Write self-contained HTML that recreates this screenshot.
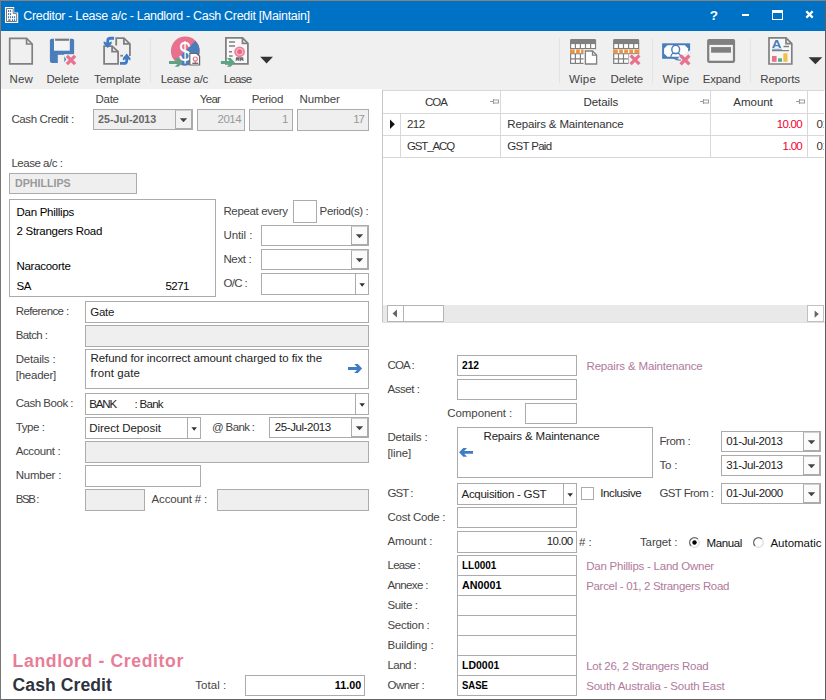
<!DOCTYPE html>
<html><head><meta charset="utf-8">
<style>
*{box-sizing:border-box;margin:0;padding:0}
html,body{width:826px;height:700px;overflow:hidden;background:#fff}
body{font-family:"Liberation Sans",sans-serif;font-size:12px;color:#333;position:relative}
#win{position:absolute;left:0;top:0;width:826px;height:700px;overflow:hidden;background:#fff}
#frame{position:absolute;left:0;top:0;width:826px;height:700px;border:1px solid #777;border-top-color:#8a8178;border-right-color:#5c5c5c;border-bottom-color:#666;pointer-events:none}
.abs,.l,.b,.t{position:absolute;white-space:nowrap}
#title{position:absolute;left:1px;top:1px;width:824px;height:30px;background:#0072c6}
#title .cap{position:absolute;left:22.300px;top:6px;color:#fff;font-size:12.500px;letter-spacing:-0.320px;line-height:18px}
#tb{position:absolute;left:1px;top:31px;width:824px;height:58px;background:#f0f0f0}
.tl{position:absolute;top:71px;font-size:11.5px;letter-spacing:-0.200px;line-height:16px;color:#444;transform:translateX(-50%);white-space:nowrap}
.l{font-size:11.5px;letter-spacing:-0.4px;line-height:16px;color:#444}
.b{border:1px solid #ababab;background:#fff;height:21px;font-size:11.5px;letter-spacing:-0.4px;line-height:19px;color:#222;padding:0 4px;overflow:hidden}
.g{background:#efefef}
.bold{font-weight:bold}
.r{text-align:right}
.p{color:#b07a9c}
.k{color:#111}
.dd{position:absolute;right:0;top:0;bottom:0;width:17px;border:1px solid #ababab;border-top-color:#cfcfcf;background:#fbfbfb}
.dd:after{content:"";position:absolute;left:3.800px;top:7.200px;width:7.400px;height:4px;background:#444;clip-path:polygon(0 0,100% 0,50% 100%)}
.dd2{position:absolute;right:0;top:0;bottom:0;width:13px;border-left:1px solid #ababab;background:#fff}
.dd2:after{content:"";position:absolute;left:3.400px;top:9.300px;width:5.600px;height:3.400px;background:#333;clip-path:polygon(0 0,100% 0,50% 100%)}
.rad{position:absolute;width:11px;height:11px;border-radius:50%;border:1px solid #8a8a8a;background:#fff;box-shadow:inset 1px 1px 1px #bbb}
.rad.on:after{content:"";position:absolute;left:2.500px;top:2.500px;width:4px;height:4px;border-radius:50%;background:#111}
</style></head><body>
<div id="win">
<div id="title"><div class="cap">Creditor - Lease a/c - Landlord - Cash Credit [Maintain]</div>
<svg class="abs" style="left:0;top:0" width="824" height="30" viewBox="1 1 824 30">
<path d="M6,8H13.200V13.600H17.200V22H6Z" fill="#fff" stroke="#fff" stroke-width="2" stroke-linejoin="miter"/>
<path d="M6.500,8.500H13.200V13.600H16.700V21.500H6.500Z" fill="#fff" stroke="#777" stroke-width="1"/>
<g fill="#3f78c0"><rect x="8" y="10" width="1.100" height="2"/><rect x="10" y="10" width="1.100" height="2"/><rect x="8" y="13.100" width="1.100" height="2"/><rect x="10" y="13.100" width="1.100" height="2"/><rect x="8" y="16.200" width="1.100" height="2"/><rect x="10" y="16.200" width="1.100" height="2"/><rect x="12" y="16.200" width="1.100" height="2"/><rect x="14" y="16.200" width="1.100" height="2"/><rect x="12" y="19.200" width="1.100" height="2"/><rect x="14" y="19.200" width="1.100" height="2"/></g>
<rect x="8.300" y="19.300" width="2.300" height="1.900" fill="#777"/>
<rect x="742" y="14" width="7" height="2" fill="#fff"/>
<rect x="772.500" y="11.500" width="10" height="8" fill="none" stroke="#fff" stroke-width="1"/><rect x="772" y="10" width="11" height="3" fill="#fff"/>
<path d="M806.300,11.200L812.700,17.600M812.700,11.200L806.300,17.600" stroke="#fff" stroke-width="2.200"/>
</svg>
<div class="abs bold" style="left:708.800px;top:6.500px;color:#fff;font-size:13.500px;line-height:16px">?</div>
</div>
<div id="tb"></div>

<svg class="abs" style="left:0;top:30px" width="826" height="60" viewBox="0 30 826 60">
<!-- separators -->
<g stroke="#e3e3e3" stroke-width="1"><path d="M150.5,38V83M559.5,38V83M652.5,38V83M750.5,38V83"/></g>
<!-- New -->
<g fill="none" stroke="#808080" stroke-width="1.7"><path d="M9.7,38.4H26.6L32.2,44V63.9H9.7Z"/><path d="M26.6,38.4V44H32.2"/></g>
<!-- Delete floppy -->
<path d="M51.700,38.800H72.300Q74.100,38.800 74.100,40.600V61.100Q74.100,62.900 72.300,62.900H51.700Q49.900,62.900 49.900,61.100V40.600Q49.900,38.800 51.700,38.800Z" fill="#4a7ebb"/>
<rect x="54" y="38.700" width="15.800" height="12" fill="#f4f4f4"/>
<rect x="55.100" y="38.800" width="13.900" height="2" fill="#7a7a7a"/>
<rect x="57.800" y="54.800" width="7" height="8.300" fill="#f0f0f0"/>
<rect x="64.100" y="54.200" width="11" height="9.500" fill="#f0f0f0"/>
<path d="M64.300,56.200L66.200,59.400L64.300,62.300Z" fill="#4a7ebb"/>
<g stroke="#e8728f" stroke-width="3.300" stroke-linecap="butt"><path d="M66.900,55.900L75.100,64.100M75.100,55.900L66.900,64.100"/></g>
<!-- Template -->
<g fill="none" stroke="#808080" stroke-width="1.800"><path d="M116.200,45.500V38.100H123.900L129.900,43.900V55.900"/><path d="M123.900,38.100V43.800H129.900"/><path d="M120.300,55.700H123"/>
<path d="M104.100,46.200H112.100L118.100,51.600V63.900H104.100Z"/><path d="M112.100,46.200V51.600H118.100"/></g>
<path d="M114,38.250H110.500Q107.700,38.250 107.700,41V44" fill="none" stroke="#3f7cc4" stroke-width="2.800"/><path d="M103.700,41.200L107.700,43.300L111.600,41.200V43.800L107.700,48.100L103.700,43.800Z" fill="#3f7cc4"/><rect x="102" y="45.200" width="10" height="1.900" fill="#f0f0f0" opacity="0"/>
<path d="M120,63.450H124Q126.700,63.450 126.700,60.700V58" fill="none" stroke="#3f7cc4" stroke-width="2.800"/><path d="M122.900,60.500L126.700,58.400L130.400,60.500V57.900L126.700,53.600L122.900,57.900Z" fill="#3f7cc4"/>
<!-- Lease a/c -->
<circle cx="185.3" cy="51" r="14.4" fill="#e8718d"/>
<path d="M181.5,54.700L195.400,40.800A14.4,14.4 0 0 1 181.500,64.900Z" fill="#4a7ebb"/>
<text transform="translate(185,61.300) scale(0.72,1)" font-family="Liberation Sans,sans-serif" font-size="28.500" fill="#fff" text-anchor="middle">$</text>
<path d="M189.800,53.500H196.800L199.600,56.300V65H189.800Z" fill="#fff" stroke="#666" stroke-width="1.200"/>
<circle cx="195.300" cy="59" r="2" fill="none" stroke="#e8718d" stroke-width="1.200"/><path d="M195.300,61V63.500" stroke="#e8718d" stroke-width="1.200"/><path d="M192.300,63.300H198.300" stroke="#666" stroke-width="1.300"/>
<path d="M169,61H177.500L174.800,58H178.500L182.700,62.400L178.500,66.700H174.800L177.500,64H169Z" fill="#5ba585"/>
<!-- Lease -->
<g fill="#f8f8f8" stroke="#808080" stroke-width="1.800"><path d="M225.900,37.900H242.600L247.900,43.300V63.900H225.900Z"/><path d="M242.500,37.900V43.400H247.900" fill="none"/></g>
<g stroke="#808080" stroke-width="1.500"><path d="M229,41.900H235M229,46.100H235M229,51.800H232M229,55.900H232.700"/></g>
<path d="M236,57.300L235.600,61.200L237.700,60L239.200,61.400L239.600,57.300ZM243.200,57.300L243.600,61.200L241.500,60L240,61.400L239.600,57.300Z" fill="#6e6e6e"/>
<circle cx="239.600" cy="51.800" r="5.400" fill="#ee8199"/><circle cx="239.600" cy="51.800" r="3.300" fill="none" stroke="#f9c9d3" stroke-width="0.900"/><circle cx="239.600" cy="51.800" r="2" fill="#e9647f"/>
<path d="M220.900,61H229.600L226.900,58H230.600L234.900,62.400L230.600,66.700H226.900L229.600,64H220.900Z" fill="#5ba585"/>
<path d="M260.200,56.800H273L266.600,63.600Z" fill="#333"/>
<!-- Wipe table -->
<g><path d="M570,44V40.400Q570,39 571.400,39H594.700Q596.100,39 596.100,40.400V44Z" fill="#808080"/>
<rect x="570.600" y="43.500" width="24.900" height="19.900" fill="#fff" stroke="#808080" stroke-width="1.200"/>
<path d="M575.400,44V63.500M580.400,44V63.500M585.500,44V63.500M590.600,44V63.500M570,48.700H596M570,53.700H596M570,58.800H596" fill="none" stroke="#808080" stroke-width="1.200"/>
<rect x="570" y="49.300" width="26.100" height="3.900" fill="#fff"/>
<g fill="#f0923a"><rect x="570" y="49.400" width="4.700" height="3.700"/><rect x="576.100" y="49.400" width="3.700" height="3.700"/><rect x="581.100" y="49.400" width="3.700" height="3.700"/><rect x="586.200" y="49.400" width="3.700" height="3.700"/><rect x="591.300" y="49.400" width="4.800" height="3.700"/></g></g>
<rect x="583.500" y="49.400" width="15" height="16" fill="#f0f0f0"/>
<g fill="#fff" stroke="#808080" stroke-width="1.300"><path d="M585.400,51H592.500L596.600,55.100V64H585.400Z"/><path d="M592.500,51V55.100H596.600" fill="none"/></g>
<!-- Delete table -->
<g transform="translate(43.100,0)"><path d="M570,44V40.400Q570,39 571.400,39H594.700Q596.100,39 596.100,40.400V44Z" fill="#808080"/>
<rect x="570.600" y="43.500" width="24.900" height="19.900" fill="#fff" stroke="#808080" stroke-width="1.200"/>
<path d="M575.400,44V63.500M580.400,44V63.500M585.500,44V63.500M590.600,44V63.500M570,48.700H596M570,53.700H596M570,58.800H596" fill="none" stroke="#808080" stroke-width="1.200"/>
<rect x="570" y="49.300" width="26.100" height="3.900" fill="#fff"/>
<g fill="#f0923a"><rect x="570" y="49.400" width="4.700" height="3.700"/><rect x="576.100" y="49.400" width="3.700" height="3.700"/><rect x="581.100" y="49.400" width="3.700" height="3.700"/><rect x="586.200" y="49.400" width="3.700" height="3.700"/><rect x="591.300" y="49.400" width="4.800" height="3.700"/></g></g>
<rect x="628.500" y="54.300" width="12" height="11" fill="#f0f0f0"/>
<g stroke="#e8718d" stroke-width="3.200"><path d="M630.600,55.400L639.400,64.200M639.400,55.400L630.600,64.200"/></g>
<!-- Wipe money -->
<rect x="662.100" y="43.300" width="28" height="15.500" fill="#4a7ebb"/>
<path d="M667.300,45.300H684.900L688.100,48.500V53.600L684.900,56.800H667.300L664.100,53.600V48.500Z" fill="#fff"/>
<ellipse cx="675.700" cy="49.600" rx="3.900" ry="4.300" fill="#fff" stroke="#4a7ebb" stroke-width="1.400"/>
<path d="M670.800,56.800Q671.300,52.600 675.700,53.300Q680.100,52.600 680.600,56.800" fill="none" stroke="#4a7ebb" stroke-width="1.300"/>
<path d="M690.500,50L678.500,57.500L677,66H691Z" fill="#f0f0f0"/>
<path d="M673,57.800Q677,60.500 681,60.200" fill="none" stroke="#4a7ebb" stroke-width="1.200"/>
<g stroke="#e8718d" stroke-width="3.200"><path d="M680.600,55.500L689.400,64.300M689.400,55.500L680.600,64.300"/></g>
<!-- Expand -->
<rect x="707.100" y="38.900" width="28" height="24" rx="1.800" fill="#808080"/>
<rect x="709.300" y="44.900" width="23.600" height="15.800" fill="#f3f3f3"/>
<rect x="711.100" y="47.100" width="19.900" height="5.600" fill="#808080"/>
<!-- Reports -->
<g fill="#f7f7f7" stroke="#808080" stroke-width="1.700"><path d="M769,37.800H786L791.800,43.600V64H769Z"/><path d="M786,37.800V43.600H791.800" fill="none"/></g>
<text transform="translate(771.800,48.200) scale(1.28,1)" font-family="Liberation Sans,sans-serif" font-size="10.500" font-weight="bold" fill="#4a7ebb">A</text>
<path d="M772,50.700H789M783.500,46.500H789" stroke="#808080" stroke-width="1.300"/><path d="M772,49.300H782" stroke="#4a7ebb" stroke-width="0.800"/>
<rect x="772" y="56" width="4.600" height="5.800" fill="#e8718d"/><rect x="778" y="58.300" width="4" height="3.500" fill="#5fa886"/><rect x="783.300" y="53.300" width="4.200" height="8.500" fill="#efc04e"/>
<path d="M808.500,57.300H822.300L815.400,64.300Z" fill="#333"/>
</svg>


<div class="l " style="left:9.5px;top:71px;letter-spacing:0.131px;">New</div>
<div class="l " style="left:46.4px;top:71px;letter-spacing:-0.107px;">Delete</div>
<div class="l " style="left:93.9px;top:71px;letter-spacing:0.017px;">Template</div>
<div class="l " style="left:160.7px;top:71px;letter-spacing:-0.274px;">Lease a/c</div>
<div class="l " style="left:223.7px;top:71px;letter-spacing:-0.707px;">Lease</div>
<div class="l " style="left:569px;top:71px;letter-spacing:0.225px;">Wipe</div>
<div class="l " style="left:610.6px;top:71px;letter-spacing:-0.124px;">Delete</div>
<div class="l " style="left:662.4px;top:71px;letter-spacing:0.225px;">Wipe</div>
<div class="l " style="left:702.7px;top:71px;letter-spacing:-0.217px;">Expand</div>
<div class="l " style="left:760.3px;top:71px;letter-spacing:-0.095px;">Reports</div>
<div class="l " style="left:95.6px;top:91px;letter-spacing:-0.323px;">Date</div>
<div class="l " style="left:199.8px;top:91px;letter-spacing:-0.709px;">Year</div>
<div class="l " style="left:251.7px;top:91px;letter-spacing:-0.324px;">Period</div>
<div class="l " style="left:299.5px;top:91px;letter-spacing:-0.117px;">Number</div>
<div class="l " style="left:11.4px;top:111px;letter-spacing:-0.362px;">Cash Credit :</div>
<div class="b g bold" style="left:93px;top:109px;width:100px;line-height:18px;color:#666;padding-left:4px"><span style="display:inline-block;letter-spacing:0;transform:scaleX(0.9290);transform-origin:left center">25-Jul-2013</span><span class="dd" style="background:#f2f2f2"></span></div>
<div class="b g r" style="left:197px;top:109px;width:48px;height:22px;letter-spacing:-0.546px;color:#999;padding-right:3px">2014</div>
<div class="b g r" style="left:249px;top:109px;width:44px;height:22px;color:#999">1</div>
<div class="b g r" style="left:297px;top:109px;width:72px;height:22px;letter-spacing:-0.996px;color:#999">17</div>
<div class="l " style="left:11.4px;top:155px;letter-spacing:-0.469px;">Lease a/c :</div>
<div class="b g bold" style="left:9px;top:173px;width:128px;color:#999;padding-left:4.500px"><span style="display:inline-block;letter-spacing:0;transform:scaleX(0.9274);transform-origin:left center">DPHILLIPS</span></div>
<div class="b " style="left:9px;top:199px;width:207px;height:98px;"></div>
<div class="l k" style="left:16.5px;top:203.5px;letter-spacing:-0.269px;color:#000">Dan Phillips</div>
<div class="l k" style="left:16.5px;top:223px;letter-spacing:-0.290px;color:#000">2 Strangers Road</div>
<div class="l k" style="left:16.5px;top:258px;letter-spacing:-0.289px;color:#000">Naracoorte</div>
<div class="l k" style="left:16.5px;top:278px;letter-spacing:-0.421px;color:#000">SA</div>
<div class="l k" style="left:165.5px;top:278px;letter-spacing:-0.521px;color:#000">5271</div>
<div class="l " style="left:223.4px;top:203px;letter-spacing:-0.342px;">Repeat every</div>
<div class="b " style="left:293px;top:200px;width:24px;height:23px;"></div>
<div class="l " style="left:319.6px;top:203px;letter-spacing:-0.386px;">Period(s) :</div>
<div class="l " style="left:223.4px;top:227px;letter-spacing:-0.057px;">Until :</div>
<div class="b " style="left:261px;top:225px;width:108px;line-height:18px;"><span class="dd"></span></div>
<div class="l " style="left:223.4px;top:251px;letter-spacing:-0.339px;">Next :</div>
<div class="b " style="left:261px;top:249px;width:108px;line-height:18px;"><span class="dd"></span></div>
<div class="l " style="left:223.4px;top:275px;letter-spacing:-0.647px;">O/C :</div>
<div class="b " style="left:261px;top:273px;width:108px;height:22px;"><span class="dd2"></span></div>
<div class="l " style="left:15.7px;top:303px;letter-spacing:-0.595px;">Reference :</div>
<div class="l " style="left:15.7px;top:327px;letter-spacing:-0.585px;">Batch :</div>
<div class="l " style="left:15.7px;top:351px;letter-spacing:-0.205px;">Details :</div>
<div class="l " style="left:15.7px;top:395px;letter-spacing:-0.477px;">Cash Book :</div>
<div class="l " style="left:15.7px;top:419px;letter-spacing:-0.437px;">Type :</div>
<div class="l " style="left:15.7px;top:443px;letter-spacing:-0.371px;">Account :</div>
<div class="l " style="left:15.7px;top:467px;letter-spacing:-0.236px;">Number :</div>
<div class="l " style="left:15.7px;top:491px;letter-spacing:-1.440px;">BSB :</div>
<div class="l " style="left:15.7px;top:367px;letter-spacing:-0.225px;">[header]</div>
<div class="b " style="left:85px;top:301px;width:284px;height:22px;letter-spacing:-0.308px;line-height:20px;padding-left:4.300px">Gate</div>
<div class="b g" style="left:85px;top:325px;width:284px;height:22px;"></div>
<div class="b " style="left:85px;top:349px;width:284px;height:40px;line-height:15px;padding:1px 0 0 4.500px"><span style="letter-spacing:-0.053px;">Refund for incorrect amount charged to fix the</span><br><span style="letter-spacing:0.081px;">front gate</span></div>
<div class="b " style="left:85px;top:393px;width:284px;height:22px;line-height:20px;padding-left:3.300px"><span style="letter-spacing:-1.154px;">BANK</span><span style="display:inline-block;width:18.500px"></span><span style="letter-spacing:-0.700px;">: Bank</span><span class="dd2"></span></div>
<div class="b " style="left:85px;top:417px;width:116px;height:22px;letter-spacing:-0.051px;line-height:20px;padding-left:3.300px">Direct Deposit<span class="dd2"></span></div>
<div class="l " style="left:212px;top:419px;letter-spacing:-0.634px;">@ Bank :</div>
<div class="b " style="left:269px;top:417px;width:100px;letter-spacing:-0.430px;line-height:18px;padding-left:4.800px">25-Jul-2013<span class="dd"></span></div>
<div class="b g" style="left:85px;top:441px;width:284px;height:22px;"></div>
<div class="b " style="left:85px;top:465px;width:116px;height:22px;"></div>
<div class="b g" style="left:85px;top:489px;width:60px;height:22px;"></div>
<div class="l " style="left:151.6px;top:491px;letter-spacing:-0.194px;">Account # :</div>
<div class="b g" style="left:217px;top:489px;width:152px;height:22px;"></div>
<svg class="abs" style="left:340px;top:360px" width="26" height="16" viewBox="340 360 26 16"><path d="M348,367.100H357L354.200,364.100H357.900L362.100,368.500L357.900,372.900H354.200L357,369.900H348Z" fill="#3f7cc4"/></svg>
<div class="abs bold" style="left:12.600px;top:650px;font-size:17.600px;line-height:22px;color:#e87d98;letter-spacing:0.633px;">Landlord - Creditor</div>
<div class="abs bold" style="left:12.600px;top:674px;font-size:17.600px;line-height:22px;color:#2f3340;letter-spacing:0.048px;">Cash Credit</div>
<div class="l " style="left:195.2px;top:677px;letter-spacing:0.060px;">Total :</div>
<div class="b bold r" style="left:245px;top:675px;width:120px;line-height:18px;color:#000;padding-right:2.700px"><span style="display:inline-block;letter-spacing:0;transform:scaleX(0.9345);transform-origin:right center">11.00</span></div>
<style>
.gl{position:absolute;background:#d8d8d8}
.pin{position:absolute;width:9px;height:5px}
</style>
<div class="abs" style="left:382px;top:89px;width:443px;height:1px;background:#f0f0f0"></div>
<div class="gl" style="left:382px;top:90px;width:442px;height:1px"></div>
<div class="gl" style="left:382px;top:113px;width:442px;height:1px"></div>
<div class="gl" style="left:382px;top:135px;width:442px;height:1px"></div>
<div class="gl" style="left:382px;top:157px;width:442px;height:1px"></div>
<div class="gl" style="left:382px;top:90px;width:1px;height:233px;background:#c6c6c6"></div>
<div class="gl" style="left:382px;top:322px;width:443px;height:1px;background:#e0e0e0"></div>
<div class="gl" style="left:400px;top:113px;width:1px;height:45px"></div>
<div class="gl" style="left:500px;top:90px;width:1px;height:68px"></div>
<div class="gl" style="left:710px;top:90px;width:1px;height:68px"></div>
<div class="gl" style="left:807px;top:90px;width:1px;height:68px"></div>

<svg class="pin" style="left:490px;top:99px" viewBox="0 0 9 5"><path d="M0,2.500H3.500M3.500,0V5M3.500,1H8.500V4H3.500" fill="#fff" stroke="#9c9c9c" stroke-width="1.100"/></svg>
<svg class="pin" style="left:700px;top:99px" viewBox="0 0 9 5"><path d="M0,2.500H3.500M3.500,0V5M3.500,1H8.500V4H3.500" fill="#fff" stroke="#9c9c9c" stroke-width="1.100"/></svg>
<svg class="pin" style="left:796px;top:99px" viewBox="0 0 9 5"><path d="M0,2.500H3.500M3.500,0V5M3.500,1H8.500V4H3.500" fill="#fff" stroke="#9c9c9c" stroke-width="1.100"/></svg>
<div class="l " style="left:425.1px;top:93.5px;letter-spacing:-1.073px;color:#333;">COA</div>
<div class="l " style="left:583.4px;top:93.5px;letter-spacing:-0.036px;color:#333;">Details</div>
<div class="l " style="left:733.3px;top:93.5px;letter-spacing:-0.022px;color:#333;">Amount</div>
<svg class="abs" style="left:390px;top:119px" width="6" height="11" viewBox="0 0 6 11"><path d="M0,0.500L4.800,5.200L0,10Z" fill="#111"/></svg>
<div class="l " style="left:407px;top:116px;letter-spacing:-0.562px;color:#333;">212</div>
<div class="l " style="left:507.3px;top:116px;letter-spacing:-0.159px;color:#333;">Repairs &amp; Maintenance</div>
<div class="l " style="left:776.8px;top:116px;letter-spacing:-0.736px;color:#f0002c;">10.00</div>
<div class="l " style="left:816.4px;top:116px;letter-spacing:-0.296px;color:#333;width:7.700px;overflow:hidden;">01</div>
<div class="l " style="left:407px;top:138px;letter-spacing:-1.122px;color:#333;">GST_ACQ</div>
<div class="l " style="left:507.3px;top:138px;letter-spacing:-0.693px;color:#333;">GST Paid</div>
<div class="l " style="left:782.6px;top:138px;letter-spacing:-0.771px;color:#f0002c;">1.00</div>
<div class="l " style="left:816.4px;top:138px;letter-spacing:-0.296px;color:#333;width:7.700px;overflow:hidden;">01</div>
<div class="abs" style="left:383px;top:305px;width:441px;height:17px;background:#e9e9e9"></div>
<div class="abs" style="left:387px;top:305px;width:17px;height:17px;background:#fff;border:1px solid #b4b4b4"></div>
<div class="abs" style="left:403px;top:305px;width:41px;height:17px;background:#fff;border:1px solid #b4b4b4"></div>
<div class="abs" style="left:807px;top:305px;width:17px;height:17px;background:#fff;border:1px solid #c0c0c0"></div>
<svg class="abs" style="left:392px;top:309px" width="6" height="9" viewBox="0 0 6 9"><path d="M5,0.500V8.500L0.500,4.500Z" fill="#666"/></svg>
<svg class="abs" style="left:813.500px;top:309.500px" width="6" height="9" viewBox="0 0 6 9"><path d="M0.600,0.500V7.700L4.800,4.100Z" fill="#666"/></svg>

<div class="l " style="left:387.5px;top:357px;letter-spacing:-0.895px;">COA :</div>
<div class="b bold" style="left:457px;top:355px;width:120px;line-height:18px;color:#000;padding-left:4.300px"><span style="display:inline-block;letter-spacing:0;transform:scaleX(0.8860);transform-origin:left center">212</span></div>
<div class="l p" style="left:586.5px;top:358px;letter-spacing:-0.168px;">Repairs &amp; Maintenance</div>
<div class="l " style="left:387.5px;top:381px;letter-spacing:-0.464px;">Asset :</div>
<div class="b " style="left:457px;top:379px;width:120px;"></div>
<div class="l " style="left:447.3px;top:405px;letter-spacing:-0.086px;">Component :</div>
<div class="b " style="left:525px;top:403px;width:52px;"></div>
<div class="l " style="left:387.5px;top:429px;letter-spacing:-0.182px;">Details :</div>
<div class="l " style="left:387.5px;top:445px;letter-spacing:-0.099px;">[line]</div>
<div class="b " style="left:457px;top:427px;width:196px;height:51px;letter-spacing:-0.168px;line-height:15px;padding:1px 0 0 25.500px">Repairs &amp; Maintenance</div>
<svg class="abs" style="left:458px;top:445px" width="18" height="14" viewBox="458 445 18 14"><path d="M473,450.900H464.200L467,447.900H463.300L459.100,452.300L463.300,456.700H467L464.200,453.700H473Z" fill="#3f7cc4"/></svg>
<div class="l " style="left:659.4px;top:433px;letter-spacing:-0.370px;">From :</div>
<div class="b " style="left:721px;top:431px;width:100px;letter-spacing:-0.412px;line-height:18px;padding-left:4.300px">01-Jul-2013<span class="dd"></span></div>
<div class="l " style="left:659.4px;top:457px;letter-spacing:-0.134px;">To :</div>
<div class="b " style="left:721px;top:455px;width:100px;letter-spacing:-0.412px;line-height:18px;padding-left:4.300px">31-Jul-2013<span class="dd"></span></div>
<div class="l " style="left:387.5px;top:485px;letter-spacing:-0.985px;">GST :</div>
<div class="b " style="left:457px;top:483px;width:120px;height:22px;letter-spacing:-0.275px;line-height:20px;padding-left:3.500px">Acquisition - GST<span class="dd2"></span></div>
<div class="b " style="left:581px;top:487px;width:13px;height:13px;"></div>
<div class="l k" style="left:600.3px;top:485px;letter-spacing:-0.416px;color:#222">Inclusive</div>
<div class="l " style="left:659.4px;top:485px;letter-spacing:-0.585px;">GST From :</div>
<div class="b " style="left:721px;top:483px;width:100px;letter-spacing:-0.385px;line-height:18px;padding-left:4.300px">01-Jul-2000<span class="dd"></span></div>
<div class="l " style="left:387.5px;top:509px;letter-spacing:-0.266px;">Cost Code :</div>
<div class="b " style="left:457px;top:507px;width:120px;"></div>
<div class="l " style="left:387.5px;top:533px;letter-spacing:-0.140px;">Amount :</div>
<div class="b r" style="left:457px;top:531px;width:120px;height:22px;letter-spacing:-0.616px;padding-right:3.500px">10.00</div>
<div class="l " style="left:578.9px;top:533.5px;letter-spacing:-0.029px;"># :</div>
<div class="l " style="left:640px;top:533.5px;letter-spacing:-0.132px;">Target :</div>
<svg class="abs" style="left:688.2px;top:536px" width="13" height="13" viewBox="0 0 13 13"><circle cx="6.500" cy="6.500" r="4.600" fill="#fff"/><path d="M3.100,9.900A4.700,4.700 0 0 1 9.900,3.100" fill="none" stroke="#6a6a6a" stroke-width="1.400"/><path d="M9.900,3.100A4.700,4.700 0 0 1 3.100,9.900" fill="none" stroke="#dcdcdc" stroke-width="1.200"/><circle cx="6.500" cy="6.500" r="2.200" fill="#000"/></svg>
<div class="l k" style="left:706.5px;top:534.5px;letter-spacing:-0.370px;color:#111">Manual</div>
<svg class="abs" style="left:751.9px;top:536px" width="13" height="13" viewBox="0 0 13 13"><circle cx="6.500" cy="6.500" r="4.600" fill="#fff"/><path d="M3.100,9.900A4.700,4.700 0 0 1 9.900,3.100" fill="none" stroke="#6a6a6a" stroke-width="1.400"/><path d="M9.900,3.100A4.700,4.700 0 0 1 3.100,9.900" fill="none" stroke="#dcdcdc" stroke-width="1.200"/></svg>
<div class="l k" style="left:770.4px;top:534.5px;letter-spacing:-0.004px;color:#111">Automatic</div>
<div class="l " style="left:387.5px;top:557px;letter-spacing:-0.760px;">Lease :</div>
<div class="b bold" style="left:457px;top:555px;width:120px;line-height:18px;color:#000;padding-left:4.300px"><span style="display:inline-block;letter-spacing:0;transform:scaleX(0.8680);transform-origin:left center">LL0001</span></div>
<div class="l p" style="left:586.2px;top:558px;letter-spacing:-0.236px;">Dan Phillips - Land Owner</div>
<div class="l " style="left:387.5px;top:577px;letter-spacing:-0.624px;">Annexe :</div>
<div class="b bold" style="left:457px;top:575px;width:120px;line-height:18px;color:#000;padding-left:4.300px"><span style="display:inline-block;letter-spacing:0;transform:scaleX(0.9338);transform-origin:left center">AN0001</span></div>
<div class="l p" style="left:586.2px;top:578px;letter-spacing:-0.318px;">Parcel - 01, 2 Strangers Road</div>
<div class="l " style="left:387.5px;top:597px;letter-spacing:-0.357px;">Suite :</div>
<div class="b bold" style="left:457px;top:595px;width:120px;line-height:18px;color:#000;padding-left:4.300px"></div>
<div class="l " style="left:387.5px;top:617px;letter-spacing:-0.305px;">Section :</div>
<div class="b bold" style="left:457px;top:615px;width:120px;line-height:18px;color:#000;padding-left:4.300px"></div>
<div class="l " style="left:387.5px;top:637px;letter-spacing:-0.131px;">Building :</div>
<div class="b bold" style="left:457px;top:635px;width:120px;line-height:18px;color:#000;padding-left:4.300px"></div>
<div class="l " style="left:387.5px;top:657px;letter-spacing:-0.546px;">Land :</div>
<div class="b bold" style="left:457px;top:655px;width:120px;line-height:18px;color:#000;padding-left:4.300px"><span style="display:inline-block;letter-spacing:0;transform:scaleX(0.9117);transform-origin:left center">LD0001</span></div>
<div class="l p" style="left:586.2px;top:658px;letter-spacing:-0.262px;">Lot 26, 2 Strangers Road</div>
<div class="l " style="left:387.5px;top:677px;letter-spacing:-0.523px;">Owner :</div>
<div class="b bold" style="left:457px;top:675px;width:120px;line-height:18px;color:#000;padding-left:4.300px"><span style="display:inline-block;letter-spacing:0;transform:scaleX(0.8270);transform-origin:left center">SASE</span></div>
<div class="l p" style="left:586.2px;top:678px;letter-spacing:-0.194px;">South Australia - South East</div>
<div id="frame"></div>
</div>
</body></html>
